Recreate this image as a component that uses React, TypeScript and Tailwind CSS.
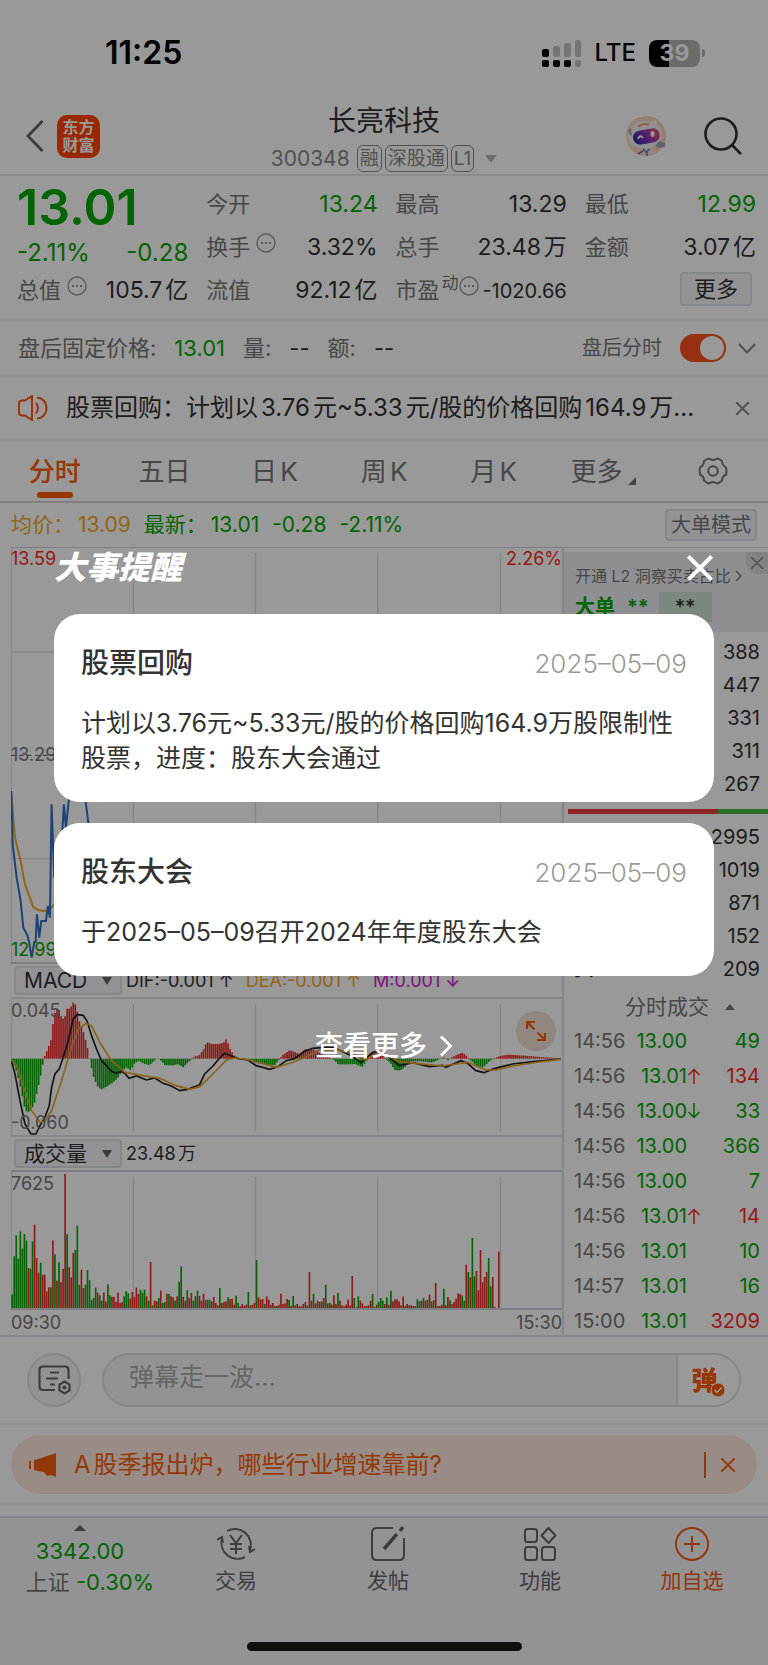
import { useState } from "react";
import type { ReactNode } from "react";

type Point = [number, number];

interface Trade {
  time: string;
  price: string;
  move?: "up" | "down";
  volume: string;
  side: "buy" | "sell";
}

const tabs = ["分时", "五日", "日K", "周K", "月K", "更多"];

const sellOrders = ["388", "447", "331", "311", "267"];
const buyOrders = ["2995", "1019", "871", "152", "209"];

const trades: Trade[] = [
  { time: "14:56", price: "13.00", volume: "49", side: "sell" },
  { time: "14:56", price: "13.01", move: "up", volume: "134", side: "buy" },
  { time: "14:56", price: "13.00", move: "down", volume: "33", side: "sell" },
  { time: "14:56", price: "13.00", volume: "366", side: "sell" },
  { time: "14:56", price: "13.00", volume: "7", side: "sell" },
  { time: "14:56", price: "13.01", move: "up", volume: "14", side: "buy" },
  { time: "14:56", price: "13.01", volume: "10", side: "sell" },
  { time: "14:57", price: "13.01", volume: "16", side: "sell" },
  { time: "15:00", price: "13.01", volume: "3209", side: "buy" },
];

const events = [
  {
    title: "股票回购",
    date: "2025–05–09",
    text: "计划以3.76元~5.33元/股的价格回购164.9万股限制性股票，进度：股东大会通过",
  },
  {
    title: "股东大会",
    date: "2025–05–09",
    text: "于2025–05–09召开2024年年度股东大会",
  },
];

// One bar per minute, positive = up (red), negative = down (green)
const volumes = [
  -40, -155, -218, -148, -230, -178, -222, -202, 120, -118, -200, 250, 150, 106, -136, 100, 100, 50, 62, -62,
  203, -161, 82, -137, 78, 117, 402, -221, 123, 92, 165, -174, -247, -70, 115, 60, -70, -114, -84, -24,
  -30, -61, 46, -38, -22, 46, 20, -71, -38, 34, 33, 18, 46, 15, 18, -35, -50, -44, 28, 48,
  33, 61, 42, -55, -46, -55, 35, -22, 138, -8, 22, 20, -30, 52, -15, -18, 43, -42, 35, 32,
  -22, 35, -79, -125, 34, 22, -53, 30, 45, -22, -36, -52, 36, 22, 43, 24, -25, -25, 20, 33,
  15, 8, -60, 15, 18, 20, -32, 27, 28, 10, -37, -15, 6, 12, 7, 10, -48, 8, 10, 15,
  -144, 32, 25, 27, -12, 35, 25, 10, 15, -6, 6, 10, 43, 12, 14, 27, -24, 6, -36, 8,
  12, 5, 5, 12, 18, -8, 108, 22, -43, 14, 22, -18, 20, 30, -70, 14, -15, 10, 38, 12,
  -45, 22, 8, 5, 10, 25, 8, 96, -30, 2, -35, 22, 14, 6, 6, 8, 22, -42, 3, 10,
  -18, -30, -22, 12, -32, 10, -52, 20, 26, 26, 20, 8, 35, -6, 12, 8, 8, 6, 6, -26,
  -20, 22, -30, 22, -25, 40, -20, 24, 75, 6, 6, 10, -58, 8, 33, -24, 12, 18, 28, 43,
  43, -38, -22, 130, -108, 92, -210, -95, 111, 53, 174, 77, 93, 108, -150, -65, 93, 3, 0, 169,
];

const macdPoints: Point[] = [
  [0, -6], [14, -40], [26, -90], [38, -150], [46, -163], [56, -155], [66, -138], [76, -95], [86, -50], [94, -6],
  [98, 8], [108, 32], [118, 60], [124, 120], [132, 150], [140, 148], [150, 118], [158, 122], [164, 150], [172, 150],
  [180, 160], [186, 174], [194, 150], [202, 112], [212, 88], [222, 50], [230, 18], [234, -8], [246, -60], [258, -85],
  [268, -93], [280, -86], [300, -74], [316, -60], [330, -38], [344, -26], [356, -35], [368, -14], [380, -6], [396, -15],
  [412, -20], [424, -9], [437, 2], [446, -5], [460, -20], [486, -20], [498, -16], [514, -26], [526, -14], [538, -3],
  [547, 6], [562, 10], [577, 30], [584, 50], [600, 44], [620, 44], [636, 48], [644, 60], [654, 30], [668, 8],
  [686, 0], [716, -3], [730, -12], [766, -18], [790, -19], [802, -3], [812, 10], [824, 18], [834, 26], [850, 20],
  [864, 14], [880, 28], [904, 28], [920, 20], [952, 4], [970, -6], [980, -17], [1010, -17], [1030, -16], [1052, -25],
  [1064, -8], [1076, 10], [1090, 24], [1106, 20], [1122, 0], [1136, -12], [1150, -34], [1166, -36], [1180, -26], [1196, -8],
  [1230, -8], [1262, -12], [1284, -2], [1296, 4], [1310, -5], [1322, 4], [1338, 12], [1354, 18], [1366, 8], [1376, -3],
  [1396, -22], [1416, -26], [1432, -10], [1450, 2], [1466, 8], [1492, 12], [1540, 9], [1600, 4], [1652, 1],
];

const difLine =
  "1,185 12,225 27,305 42,375 60,405 75,405 87,380 102,355 115,320 122,265 132,225 145,210 157,175 172,125 187,60 199,47 217,49 229,67 242,110 257,150 272,185 287,200 302,217 317,223 329,217 342,223 355,238 377,231 407,243 432,237 457,253 482,261 507,275 532,271 567,257 582,225 607,201 627,177 642,163 657,169 682,179 712,183 737,200 777,211 802,203 827,185 852,179 882,157 907,148 942,145 967,145 1017,167 1052,191 1087,160 1117,160 1142,180 1167,200 1207,191 1257,203 1297,199 1307,205 1352,185 1372,193 1397,215 1422,221 1452,209 1507,195 1577,187 1652,180";
const deaLine =
  "1,183 17,200 42,275 62,335 87,370 102,367 122,335 152,245 182,145 202,90 225,73 242,80 267,130 302,185 342,220 397,230 447,238 497,260 537,271 567,263 607,225 647,183 672,177 717,183 797,205 847,190 887,173 927,153 977,153 1017,160 1067,183 1107,157 1132,170 1167,188 1217,193 1297,201 1337,195 1372,190 1427,213 1457,213 1507,201 1587,189 1652,181";
const priceLine =
  "1,729 5,889 17,989 29,1059 37,1139 49,1161 54,1180 62,1229 70,1182 74,1182 78,1099 85,1169 91,1119 105,1119 111,1074 117,1109 122,769 130,990 146,940 153,870 159,769 165,839 174,754 190,640 210,680 225,765 233,829 250,900 290,880";
const averageLine = "1,734 6,800 12,869 29,939 42,1009 56,1046 67,1077 82,1086 97,1089 112,1087 132,1068 160,1040";

function valueAt(points: Point[], x: number) {
  for (let i = 1; i < points.length; i++) {
    const [x0, y0] = points[i - 1];
    const [x1, y1] = points[i];
    if (x <= x1) return y0 + ((y1 - y0) * (x - x0)) / (x1 - x0);
  }
  return 0;
}

const macdBars = Array.from({ length: 270 }, (_, i) => valueAt(macdPoints, i * 6.12));

function Chart({ height, className, children }: { height: number; className: string; children: ReactNode }) {
  return (
    <svg viewBox={`0 0 1656 ${height}`} preserveAspectRatio="none" className={`block w-full ${className}`}>
      <path
        d={`M1.5 0V${height}M368 15V${height - 9}M735 15V${height - 9}M1102 15V${height - 9}M1471 15V${height - 9}`}
        stroke="#dee0ea"
        strokeWidth="4"
      />
      {children}
    </svg>
  );
}

function CloseIcon({ className }: { className: string }) {
  return (
    <svg viewBox="0 0 24 24" fill="none" stroke="currentColor" className={className}>
      <path d="M2 2l20 20M22 2L2 22" />
    </svg>
  );
}

function MoreDots() {
  return (
    <svg viewBox="0 0 20 20" className="mt-[7px] size-5 self-start text-[#999]" fill="none" stroke="currentColor">
      <circle cx="10" cy="10" r="9" strokeWidth="1.4" />
      <path d="M5 10h2M9 10h2M13 10h2" strokeWidth="2" />
    </svg>
  );
}

function Robot() {
  return (
    <svg viewBox="0 0 40 40" className="size-10">
      <defs>
        <linearGradient id="visor" x1="0" y1="0.6" x2="1" y2="0.3">
          <stop offset="0" stopColor="#2c2ba0" />
          <stop offset="0.5" stopColor="#8a35bd" />
          <stop offset="1" stopColor="#f5506a" />
        </linearGradient>
      </defs>
      <circle cx="20" cy="20" r="20" fill="#fdd3bd" />
      <path d="M9 9L11 4l5 4M27 7l3-4 2 7" fill="#fff" stroke="#e3e3e8" />
      <ellipse cx="19" cy="19" rx="17" ry="14" fill="#f1f1f5" transform="rotate(-10 19 19)" />
      <path d="M2 14l3-2 1 8-2-1z" fill="#a5a5b0" />
      <path d="M12 10.500q5-3.500 11-2" stroke="#ef9d50" strokeWidth="2" fill="none" />
      <rect x="7" y="13.500" width="27" height="14" rx="7" fill="url(#visor)" transform="rotate(-10 20 21)" />
      <path d="M12 23q2-5 5-1" stroke="#fff" strokeWidth="2" fill="none" />
      <rect x="24.500" y="15" width="4" height="6" rx="2" fill="#fff" />
      <path d="M16 32h9l3 5-5 3h-6l-4-3z" fill="#e2e2ea" />
      <path d="M17 33l3 3 4-3M12 38l5-3M21 36v4" stroke="#77778a" strokeWidth="1.500" fill="none" />
      <path d="M29 30l4-5 6 2v4l-6 1z" fill="#a5a5b0" />
    </svg>
  );
}

function StatusBar() {
  return (
    <div className="flex h-[100px] items-center justify-between pt-1.5 pr-[63px] pl-[105px] text-black">
      <span className="text-[32px] leading-9 font-semibold">11:25</span>
      <div className="flex items-center gap-[13px]">
        <svg viewBox="0 0 40 27" className="h-[27px] w-10">
          <g fill="#000">
            <rect x="0" y="9" width="7" height="8" rx="2" />
            <rect x="0" y="20" width="7" height="7" rx="2" />
            <rect x="11" y="20" width="7" height="7" rx="2" />
            <rect x="22" y="20" width="7" height="7" rx="2" />
          </g>
          <g fill="#c4c4c4">
            <rect x="11" y="6" width="7" height="11" rx="2" />
            <rect x="22" y="3" width="7" height="14" rx="2" />
            <rect x="33" y="0" width="6" height="17" rx="2" />
            <rect x="33" y="20" width="6" height="7" rx="2" />
          </g>
        </svg>
        <span className="text-2xl font-medium">LTE</span>
        <div className="flex items-center gap-0.5">
          <span className="flex h-[27px] w-[51px] items-center justify-center rounded-lg bg-linear-to-r from-black from-40% to-[#b2b2b2] to-40% text-[23px] font-bold text-white">
            39
          </span>
          <span className="h-2 w-[3px] rounded-r bg-[#b2b2b2]" />
        </div>
      </div>
    </div>
  );
}

function Header() {
  return (
    <header className="grid h-[76px] grid-cols-[1fr_auto_1fr] items-center border-b-2 border-[#ebebeb] px-[26px] pb-1">
      <div className="flex items-center gap-[13px]">
        <button aria-label="返回" className="text-[#666]">
          <svg viewBox="0 0 18 32" className="h-8 w-[18px]" fill="none" stroke="currentColor" strokeWidth="2.800">
            <path d="M16.500 1L2 16l14.500 15" />
          </svg>
        </button>
        <div className="flex size-[43px] flex-col items-center justify-center rounded-[10px] bg-[#ff4400] text-base leading-[18px] font-semibold text-white">
          <span>东方</span>
          <span>财富</span>
        </div>
      </div>
      <div className="flex flex-col items-center gap-1.5 pt-[3px]">
        <h1 className="text-[28px] leading-9 text-[#333]">长亮科技</h1>
        <div className="flex items-center gap-[3px] text-[19px] leading-[25px] text-[#888]">
          <span className="mr-1 text-[21px]">300348</span>
          <span className="rounded-md border border-[#888] px-0.5">融</span>
          <span className="rounded-md border border-[#888] px-0.5">深股通</span>
          <span className="rounded-md border border-[#888] px-0.5">L1</span>
          <svg viewBox="0 0 12 8" className="ml-2 h-2 w-3 fill-[#b5b5b5]">
            <path d="M0 0h12L6 7.500z" />
          </svg>
        </div>
      </div>
      <div className="flex items-center justify-end gap-[38px]">
        <Robot />
        <button aria-label="搜索" className="text-[#333]">
          <svg viewBox="0 0 38 38" className="size-[38px]" fill="none" stroke="currentColor" strokeWidth="2.600">
            <circle cx="17" cy="17" r="15.500" />
            <path d="M28 28l9 9" />
          </svg>
        </button>
      </div>
    </header>
  );
}

function Stat({ label, value, green, extra }: { label: ReactNode; value: string; green?: boolean; extra?: ReactNode }) {
  return (
    <div className="flex h-[43px] items-center justify-between whitespace-nowrap">
      <span className="flex items-center gap-1.5 self-stretch text-[22px] leading-[43px] text-[#777]">
        {label}
        {extra}
      </span>
      <span className={green ? "text-[23px] text-[#00a800]" : "text-[23px] text-[#333]"}>{value}</span>
    </div>
  );
}

function Quote() {
  return (
    <section className="grid h-[145px] grid-cols-4 gap-x-[18px] border-b-2 border-[#ebebeb] pt-[7px] pr-3 pl-[17px]">
      <div className="-mt-1 flex flex-col text-[#00a800]">
        <span className="h-[57px] text-[50px] leading-[57px] font-semibold">13.01</span>
        <div className="flex h-[33px] items-center justify-between text-[24px]">
          <span>-2.11%</span>
          <span>-0.28</span>
        </div>
        <Stat label="总值" value="105.7亿" extra={<MoreDots />} />
      </div>
      <div>
        <Stat label="今开" value="13.24" green />
        <Stat label="换手" value="3.32%" extra={<MoreDots />} />
        <Stat label="流值" value="92.12亿" />
      </div>
      <div>
        <Stat label="最高" value="13.29" />
        <Stat label="总手" value="23.48万" />
        <div className="flex h-[43px] items-center justify-between">
          <span className="flex items-center self-stretch text-[22px] whitespace-nowrap text-[#777]">
            市盈
            <span className="mt-1 ml-0.5 self-start text-[17px] leading-5">动</span>
            <MoreDots />
          </span>
          <span className="text-[20px] text-[#333]">-1020.66</span>
        </div>
      </div>
      <div>
        <Stat label="最低" value="12.99" green />
        <Stat label="金额" value="3.07亿" />
        <div className="flex h-[40px] items-center justify-end pr-1">
          <button className="h-[34px] w-[72px] rounded border-2 border-[#dfe2e8] bg-[#f5f6fa] text-[22px] leading-[30px] text-[#333]">
            更多
          </button>
        </div>
      </div>
    </section>
  );
}

function AfterHours() {
  const [on, setOn] = useState(true);
  return (
    <section className="flex h-14 items-center border-b-2 border-[#ebebeb] pr-3 pl-[18px] text-[22px] text-[#777]">
      <span>盘后固定价格:</span>
      <span className="ml-[18px] text-[#00a800]">13.01</span>
      <span className="ml-[18px]">量:</span>
      <span className="ml-[18px] text-[#333]">--</span>
      <span className="ml-[18px]">额:</span>
      <span className="ml-[18px] text-[#333]">--</span>
      <label htmlFor="after-hours" className="ml-auto text-[20px]">
        盘后分时
      </label>
      <span className="relative ml-[18px] flex">
        <input
          id="after-hours"
          type="checkbox"
          checked={on}
          onChange={() => setOn(!on)}
          className="h-7 w-[46px] appearance-none rounded-full bg-[#cccccc] checked:bg-[#f9521e]"
        />
        <span
          className={
            on
              ? "pointer-events-none absolute top-0.5 right-0.5 size-6 rounded-full bg-white"
              : "pointer-events-none absolute top-0.5 left-0.5 size-6 rounded-full bg-white"
          }
        />
      </span>
      <button aria-label="展开" className="ml-3">
        <svg viewBox="0 0 18 11" className="h-[11px] w-[18px]" fill="none" stroke="#888" strokeWidth="2">
          <path d="M1 1l8 8.500L17 1" />
        </svg>
      </button>
    </section>
  );
}

function Notice() {
  return (
    <section className="flex h-16 items-center border-b-2 border-[#ebebeb] px-[18px]">
      <svg viewBox="0 0 30 26" className="h-[26px] w-[30px] shrink-0" fill="none" stroke="#fa5a14" strokeWidth="2">
        <path d="M1 8.500Q1 5.500 4 5.500H7L14 1v24L7 20.500H4Q1 20.500 1 17.500zM18 7.500q4 5.500 0 11M19 2.500c4.500 0 9.500 4 9.500 10.500S23.500 23.500 19 23.500" />
      </svg>
      <p className="ml-[18px] truncate text-[24px] text-[#333]">
        股票回购：计划以3.76元~5.33元/股的价格回购164.9万...
      </p>
      <button aria-label="关闭" className="ml-auto text-[#888]">
        <CloseIcon className="size-[15px] stroke-3" />
      </button>
    </section>
  );
}

function Tabs() {
  const [active, setActive] = useState("分时");
  return (
    <nav className="grid h-[62px] grid-cols-7 border-b-2 border-[#d6d6d8] text-[26px]">
      {tabs.map((tab) => (
        <button
          key={tab}
          onClick={() => setActive(tab)}
          className={
            tab === active
              ? "relative flex items-center justify-center font-medium text-[#fa5a00]"
              : "relative flex items-center justify-center text-[#777]"
          }
        >
          {tab}
          {tab === "更多" && (
            <svg viewBox="0 0 8 8" className="mt-5 ml-1.5 size-2 fill-[#777]">
              <path d="M8 0v8H0z" />
            </svg>
          )}
          {tab === active && <span className="absolute bottom-[3px] h-1.5 w-9 rounded-full bg-[#fa5a00]" />}
        </button>
      ))}
      <button aria-label="设置" className="flex items-center justify-center text-[#777]">
        <svg viewBox="0 0 30 28" className="h-7 w-[30px]" fill="none" stroke="currentColor" strokeWidth="2">
          <path
            strokeLinejoin="round"
            d="M10 1.500l2 .5q3 2 6 0l2-.5 4 2.500q0 4 4 6.500l.5 3.500-.5 3.500q-4 2-4 6l-4 3-2-.5q-3-2-6 0l-2 .5-4-3q0-4-4-6L1.500 14l.5-3.500q4-2 4-6.500z"
          />
          <circle cx="15" cy="14" r="4.800" />
        </svg>
      </button>
    </nav>
  );
}

function PricePanel() {
  return (
    <div className="min-w-0 flex-1 border-r-2 border-[#dee0ea] text-[18px] text-[#777]">
      <div className="relative border-b-2 border-[#cfd1d9]">
        <Chart height={1242} className="h-[414px]">
          <path d="M0 312H1656M0 932H1656" stroke="#dee0ea" strokeWidth="4" />
          <path d="M0 622H1656" stroke="#777" strokeWidth="4" strokeDasharray="14 10" />
          <polyline points={averageLine} fill="none" stroke="#f2a92c" strokeWidth="6" />
          <polyline points={priceLine} fill="none" stroke="#2e71c4" strokeWidth="6" />
        </Chart>
        <span className="absolute top-0 left-0 leading-[22px] text-[#fb2a2a]">13.59</span>
        <span className="absolute top-0 right-0 leading-[22px] text-[#fb2a2a]">2.26%</span>
        <span className="absolute top-[195px] left-0 leading-6">13.29</span>
        <span className="absolute bottom-0 left-0 leading-6 text-[#00a800]">12.99</span>
      </div>

      <div className="flex h-[35px] items-center gap-1 border-b-2 border-[#e2e3ea] pl-[3px]">
        <IndicatorSelect label="指标" value="MACD" />
        <div className="flex gap-3 whitespace-nowrap">
          <span className="text-[#333]">DIF:-0.001 ↑</span>
          <span className="text-[#f2a92c]">DEA:-0.001 ↑</span>
          <span className="text-[#d51bd5]">M:0.001 ↓</span>
        </div>
      </div>

      <div className="relative border-b-2 border-[#e2e3ea]">
        <Chart height={408} className="h-[136px]">
          {macdBars.map((value, i) => (
            <rect
              key={i}
              x={i * 6.12 + 1}
              y={value > 0 ? 179 - value : 179}
              width="5"
              height={Math.abs(value)}
              fill={value > 0 ? "#f12a2a" : "#0ba50b"}
            />
          ))}
          <polyline points={difLine} fill="none" stroke="#222" strokeWidth="5" />
          <polyline points={deaLine} fill="none" stroke="#e8a52c" strokeWidth="5" />
        </Chart>
        <span className="absolute top-0 left-0 leading-6">0.045</span>
        <span className="absolute bottom-0 left-0 leading-6">-0.060</span>
        <button
          aria-label="全屏"
          className="absolute top-3 right-1.5 flex size-10 items-center justify-center rounded-full bg-[#f3e1d4]"
        >
          <svg viewBox="0 0 20 20" className="size-5" fill="none" stroke="#fa5a14" strokeWidth="2.200">
            <path d="M1 8V1h8M1 1l7.500 7.500M19 12v7h-8M19 19l-7.500-7.500" />
          </svg>
        </button>
      </div>

      <div className="flex h-[35px] items-center gap-1 border-b-2 border-[#cfd1d9] pl-[3px]">
        <IndicatorSelect label="副图" value="成交量" />
        <span className="text-[#333]">23.48万</span>
      </div>

      <div className="relative border-b-2 border-[#cfd1d9]">
        <Chart height={408} className="h-[136px]">
          {volumes.map((value, i) => (
            <rect
              key={i}
              x={i * 6.12 + 1}
              y={408 - Math.abs(value)}
              width="5"
              height={Math.abs(value)}
              fill={value > 0 ? "#f12a2a" : "#0ba50b"}
            />
          ))}
        </Chart>
        <span className="absolute top-0 left-0 leading-6">7625</span>
      </div>
      <div className="flex h-[25px] items-center justify-between">
        <span>09:30</span>
        <span>15:30</span>
      </div>
    </div>
  );
}

function IndicatorSelect({ label, value }: { label: string; value: string }) {
  return (
    <span className="relative flex items-center">
      <select
        aria-label={label}
        defaultValue={value}
        className="h-[29px] w-[108px] appearance-none rounded border-2 border-[#dfe2e8] bg-[#f5f6fa] pl-2 text-[21px] leading-[25px] text-[#333]"
      >
        <option>{value}</option>
      </select>
      <svg viewBox="0 0 10 8" className="pointer-events-none absolute right-2.5 h-2 w-2.5 fill-[#666]">
        <path d="M0 0h10L5 8z" />
      </svg>
    </span>
  );
}

function OrderTable({ rows, lastLabel, lastPrice }: { rows: string[]; lastLabel?: string; lastPrice?: string }) {
  return (
    <table className="w-full text-[20px] leading-6 text-[#333]">
      <tbody>
        {rows.map((volume, i) => (
          <tr key={volume} className="h-[33px]">
            <td className="pl-2.5">{i === rows.length - 1 ? lastLabel : ""}</td>
            <td className="text-right text-[#00a800]">{i === rows.length - 1 ? lastPrice : ""}</td>
            <td className="w-[84px] pr-2 text-right">{volume}</td>
          </tr>
        ))}
      </tbody>
    </table>
  );
}

function OrderPanel() {
  return (
    <aside className="-mb-1 w-[204px] shrink-0 pt-1">
      <div className="relative mb-[3px] h-20 bg-[#eeeff5] pt-3 pl-[11px]">
        <a href="#level2" className="flex items-center text-base leading-6 whitespace-nowrap text-[#777]">
          开通 L2 洞察买卖占比
          <svg viewBox="0 0 7 12" className="ml-1 h-3 w-[7px]" fill="none" stroke="currentColor" strokeWidth="1.500">
            <path d="M1 1l5 5-5 5" />
          </svg>
        </a>
        <button
          aria-label="关闭提示"
          className="absolute top-0 right-0 flex size-[22px] items-center justify-center rounded-bl-xl bg-[#d9dae0] text-[#888]"
        >
          <CloseIcon className="size-3.5 stroke-[2.5]" />
        </button>
        <div className="mt-1 flex items-center text-[20px] leading-[30px] text-[#00a800]">
          <span className="font-bold">大单</span>
          <span className="ml-3 font-semibold">**</span>
          <span className="ml-2.5 w-[53px] bg-[#cfe3d0] text-center font-medium text-[#333]">**</span>
        </div>
      </div>
      <OrderTable rows={sellOrders} />
      <div className="mt-[9px] mb-1.5 ml-1 flex h-[5px]">
        <span className="w-3/4 bg-[#ee3f3f]" />
        <span className="w-1/4 bg-[#46b83f]" />
      </div>
      <OrderTable rows={buyOrders} lastLabel="买5" lastPrice="12.97" />
      <button className="flex h-[38px] w-full items-end justify-center gap-4 pb-px pl-7 text-[21px] leading-[30px] text-[#777]">
        分时成交
        <svg viewBox="0 0 10 6" className="mb-3 h-1.5 w-2.5 fill-[#777]">
          <path d="M0 6h10L5 0z" />
        </svg>
      </button>
      <table className="w-full text-[20px] leading-6">
        <tbody>
          {trades.map((trade, i) => (
            <tr key={i} className="h-[35px]">
              <td className="w-[63px] pl-2.5 text-[#777]">{trade.time}</td>
              <td className="w-[60px] text-right text-[#00a800]">{trade.price}</td>
              <td className="text-left">
                {trade.move && (
                  <svg
                    viewBox="0 0 14 16"
                    fill="none"
                    strokeWidth="1.500"
                    className={trade.move === "up" ? "h-4 w-3.5 stroke-[#fb2a2a]" : "h-4 w-3.5 rotate-180 stroke-[#00a800]"}
                  >
                    <path d="M7 16V1.500M1.500 7L7 1.500 12.500 7" />
                  </svg>
                )}
              </td>
              <td className={trade.side === "buy" ? "pr-2 text-right text-[#fb2a2a]" : "pr-2 text-right text-[#00a800]"}>
                {trade.volume}
              </td>
            </tr>
          ))}
        </tbody>
      </table>
    </aside>
  );
}

function ChartSection() {
  return (
    <section className="border-b-2 border-[#e2e3ea]">
      <div className="flex h-11 items-center justify-between px-[11px] text-[21px]">
        <div className="flex items-center gap-[13px] text-[#00a800]">
          <span className="flex gap-1 text-[#f2a92c]">
            <span>均价：</span>
            <span>13.09</span>
          </span>
          <span className="flex gap-1">
            <span>最新：</span>
            <span>13.01</span>
          </span>
          <span>-0.28</span>
          <span>-2.11%</span>
        </div>
        <button className="h-8 rounded border-2 border-[#dfe2e8] bg-[#f5f6fa] px-1 text-[20px] leading-7 text-[#777]">
          大单模式
        </button>
      </div>
      <div className="ml-[11px] flex border-t border-[#d0d2dd]">
        <PricePanel />
        <OrderPanel />
      </div>
    </section>
  );
}

function CommentBar() {
  return (
    <section className="flex h-[88px] items-center gap-[21px] border-b-2 border-[#f0f0f0] px-[27px]">
      <button
        aria-label="弹幕设置"
        className="flex size-[54px] shrink-0 items-center justify-center rounded-full border-2 border-[#dfe2e8] bg-[#f5f6fa]"
      >
        <svg viewBox="0 0 33 30" className="h-[30px] w-[33px]" fill="none" stroke="#666" strokeWidth="2.200">
          <path d="M17 25H5q-3.500 0-3.500-3.500v-17Q1.500 1.500 5 1.500h22q3.500 0 3.500 3.500v9M12 7.500h9M8 13.500h12M12 19.500h5" />
          <path d="M26.500 16.500l5 3v6l-5 3-5-3v-6z" />
          <circle cx="26.500" cy="22.500" r="1" />
        </svg>
      </button>
      <div className="flex h-[54px] min-w-0 flex-1 overflow-hidden rounded-full border-2 border-[#dfe2e8] bg-[#f5f6fa]">
        <input
          aria-label="弹幕"
          placeholder="弹幕走一波..."
          className="min-w-0 flex-1 bg-transparent pb-1 pl-[25px] text-[25px] text-[#333] outline-none placeholder:text-[#aaa]"
        />
        <button
          aria-label="弹幕开关"
          className="relative w-[63px] border-l-2 border-[#dfe2e8] bg-white pr-2 text-[26px] font-black text-[#fa5a00]"
        >
          弹
          <svg viewBox="0 0 14 14" className="absolute right-3.5 bottom-2 size-3.5">
            <circle cx="7" cy="7" r="7" fill="#fa5a00" stroke="#fff" />
            <path d="M3.500 7l2.500 2.500 4.500-5" fill="none" stroke="#fff" strokeWidth="1.500" />
          </svg>
        </button>
      </div>
    </section>
  );
}

function Promo() {
  return (
    <section className="h-20 border-b-2 border-[#ebebeb] px-[11px] pt-2.5">
      <div className="flex h-[59px] items-center rounded-full bg-[#ffeae0] pr-[21px] pl-[18px] text-[#f65f10]">
        <svg viewBox="0 0 27 24" className="h-6 w-[27px] fill-current">
          <path d="M0 8h2v8H0zM5 7l4-1L27 0v24l-5-2-4 1-3-4-6-1-4-1z" />
        </svg>
        <a href="#report" className="ml-[18px] text-[24px]">
          A股季报出炉，哪些行业增速靠前?
        </a>
        <span className="ml-auto h-[26px] w-0.5 bg-current" />
        <button aria-label="关闭广告" className="ml-3.5">
          <CloseIcon className="size-4 stroke-3" />
        </button>
      </div>
    </section>
  );
}

function NavItem({ label, active, children }: { label: string; active?: boolean; children: ReactNode }) {
  return (
    <button
      className={
        active
          ? "flex flex-1 flex-col items-center gap-[3px] pt-[5px] text-[21px] leading-[30px] text-[#fa5a14]"
          : "flex flex-1 flex-col items-center gap-[3px] pt-[5px] text-[21px] leading-[30px] text-[#666]"
      }
    >
      <svg viewBox="0 0 38 38" className="size-[38px]" fill="none" stroke="currentColor" strokeWidth="2">
        {children}
      </svg>
      {label}
    </button>
  );
}

function BottomNav() {
  return (
    <footer className="mt-[11px] flex h-[149px] flex-col justify-between border-t-2 border-[#dcdeea] bg-[#f5f6fa] pb-3.5">
      <nav className="flex pt-0.5">
        <button className="flex w-[160px] flex-col items-center pt-[5px] text-[22px] text-[#00a800]">
          <svg viewBox="0 0 12 6" className="h-1.5 w-3 fill-[#666]">
            <path d="M0 6h12L6 0z" />
          </svg>
          <span className="mt-1 leading-8">3342.00</span>
          <span className="pl-5 leading-[30px] whitespace-nowrap">
            <span className="text-[#777]">上证</span> -0.30%
          </span>
        </button>
        <NavItem label="交易">
          <path d="M10 6A16 16 0 0 1 33 25M28 32A16 16 0 0 1 5 14M0 15l5-3 1 6M38 24l-5 3-1-6" />
          <path d="M13 10l6 8 6-8M19 18v11M13 19h12M13 24h12" />
        </NavItem>
        <NavItem label="发帖">
          <path d="M24 3H8Q3 3 3 8v22q0 5 5 5h22q5 0 5-5V13" />
          <path d="M15 24l13-15M31 6l3-4" strokeWidth="3.500" />
        </NavItem>
        <NavItem label="功能">
          <rect x="4" y="4" width="12" height="13" rx="2.500" />
          <rect x="4" y="22" width="12" height="13" rx="2.500" />
          <rect x="21" y="22" width="13" height="13" rx="2.500" />
          <path strokeLinejoin="round" d="M27.500 3l7 7.500-7 7.500-7-7.500z" />
        </NavItem>
        <NavItem label="加自选" active>
          <circle cx="19" cy="19" r="16" />
          <path d="M11 19h16M19 11v16" />
        </NavItem>
      </nav>
      <span className="mx-auto h-[9px] w-[275px] rounded-full bg-[#1c1c1c]" />
    </footer>
  );
}

function EventsDialog({ onClose }: { onClose: () => void }) {
  return (
    <div
      role="dialog"
      aria-label="大事提醒"
      className="absolute inset-0 bg-black/40 px-[54px] pt-[546px] [text-autospace:no-autospace]"
    >
      <div className="flex h-11 items-center justify-between">
        <h2 className="text-[32px] font-black text-white italic">大事提醒</h2>
        <button aria-label="关闭" onClick={onClose} className="text-white">
          <CloseIcon className="size-7 stroke-[3.5]" />
        </button>
      </div>
      <div className="mt-6 flex flex-col gap-[21px]">
        {events.map((event) => (
          <article key={event.title} className="rounded-[26px] bg-white px-[27px] pt-7 pb-[26px]">
            <div className="flex h-[42px] items-center justify-between">
              <h3 className="text-[28px] font-medium text-[#333]">{event.title}</h3>
              <time className="text-[26px] font-light text-[#999]">{event.date}</time>
            </div>
            <p className="mt-[22px] text-[25px] leading-[35px] text-[#333]">{event.text}</p>
          </article>
        ))}
      </div>
      <a href="#events" className="mt-[52px] flex items-center justify-center gap-3 text-[28px] leading-9 font-medium text-white">
        查看更多
        <svg viewBox="0 0 14 22" className="h-[22px] w-3.5" fill="none" stroke="currentColor" strokeWidth="2.800">
          <path d="M2 1.500l9.500 9.500L2 20.500" />
        </svg>
      </a>
    </div>
  );
}

export default function App() {
  const [open, setOpen] = useState(true);
  return (
    <div className="relative min-h-screen bg-white font-[Inter,'Noto_Sans_CJK_SC',sans-serif] [text-autospace:normal]">
      <StatusBar />
      <Header />
      <Quote />
      <AfterHours />
      <Notice />
      <Tabs />
      <ChartSection />
      <CommentBar />
      <Promo />
      <BottomNav />
      {open && <EventsDialog onClose={() => setOpen(false)} />}
    </div>
  );
}
